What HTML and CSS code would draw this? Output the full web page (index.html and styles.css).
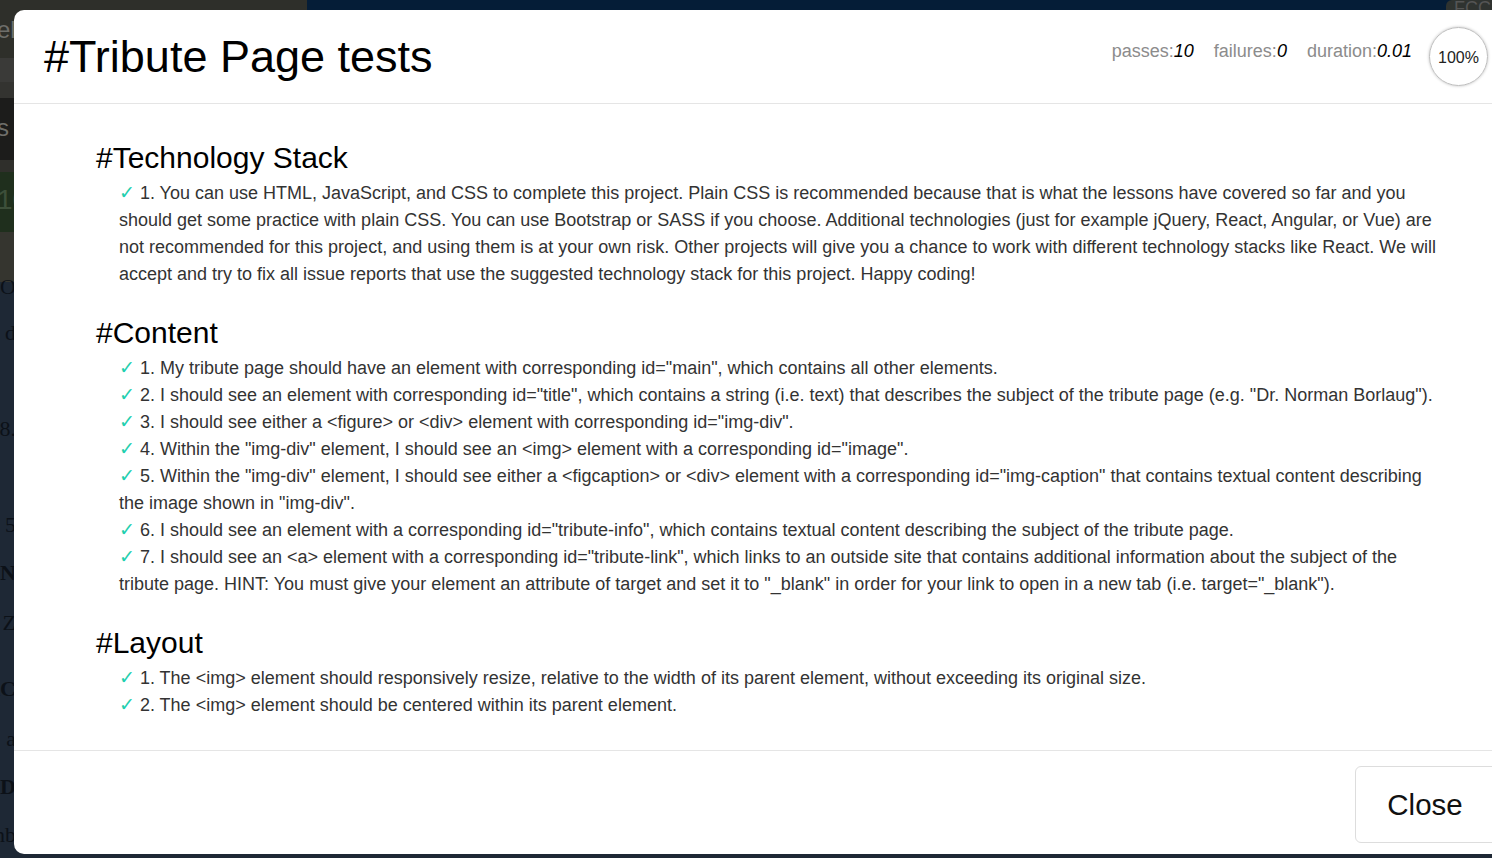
FILE: index.html
```html
<!DOCTYPE html>
<html lang="en">
<head>
<meta charset="utf-8">
<title>Tribute Page tests</title>
<link rel="stylesheet" href="styles.css">
</head>
<body>
<div class="bg">
  <div class="bg-nav">
    <div class="bg-nav-left"><span class="bg-word">el</span></div>
    <div class="bg-nav-right"><span class="fcc-btn">FCC</span></div>
  </div>
  <div class="bg-side">
    <div class="band band-a"></div>
    <div class="band band-b"></div>
    <div class="band band-c"><span class="bg-word">s</span></div>
    <div class="band band-d"></div>
    <div class="band band-e"><span class="bg-word">10</span></div>
    <div class="band band-f"></div>
    <div class="bg-text">
      <p class="t1">O</p>
      <p class="t2">d</p>
      <p class="t3">.8</p>
      <p class="t4">5</p>
      <p class="t5 bold">ON</p>
      <p class="t6">f Z</p>
      <p class="t7 bold">AC</p>
      <p class="t8">a</p>
      <p class="t9 bold">D</p>
      <p class="t10">nb</p>
    </div>
  </div>
  <div class="bg-scroll"><span class="bg-thumb"></span></div>
</div>

<div class="modal">
  <header class="modal-header">
    <h1 class="modal-title">#Tribute Page tests</h1>
    <div class="stats">
      <span class="stat">passes:<em>10</em></span>
      <span class="stat">failures:<em>0</em></span>
      <span class="stat">duration:<em>0.01</em></span>
      <span class="progress">100%</span>
    </div>
  </header>
  <main class="modal-body">
    <section class="suite">
      <h2 class="suite-title">#Technology Stack</h2>
      <ul class="tests">
        <li><span class="check">✓</span> 1. You can use HTML, JavaScript, and CSS to complete this project. Plain CSS is recommended because that is what the lessons have covered so far and you should get some practice with plain CSS. You can use Bootstrap or SASS if you choose. Additional technologies (just for example jQuery, React, Angular, or Vue) are not recommended for this project, and using them is at your own risk. Other projects will give you a chance to work with different technology stacks like React. We will accept and try to fix all issue reports that use the suggested technology stack for this project. Happy coding!</li>
      </ul>
    </section>
    <section class="suite">
      <h2 class="suite-title">#Content</h2>
      <ul class="tests">
        <li><span class="check">✓</span> 1. My tribute page should have an element with corresponding id="main", which contains all other elements.</li>
        <li><span class="check">✓</span> 2. I should see an element with corresponding id="title", which contains a string (i.e. text) that describes the subject of the tribute page (e.g. "Dr. Norman Borlaug").</li>
        <li><span class="check">✓</span> 3. I should see either a &lt;figure&gt; or &lt;div&gt; element with corresponding id="img-div".</li>
        <li><span class="check">✓</span> 4. Within the "img-div" element, I should see an &lt;img&gt; element with a corresponding id="image".</li>
        <li><span class="check">✓</span> 5. Within the "img-div" element, I should see either a &lt;figcaption&gt; or &lt;div&gt; element with a corresponding id="img-caption" that contains textual content describing the image shown in "img-div".</li>
        <li><span class="check">✓</span> 6. I should see an element with a corresponding id="tribute-info", which contains textual content describing the subject of the tribute page.</li>
        <li><span class="check">✓</span> 7. I should see an &lt;a&gt; element with a corresponding id="tribute-link", which links to an outside site that contains additional information about the subject of the tribute page. HINT: You must give your element an attribute of target and set it to "_blank" in order for your link to open in a new tab (i.e. target="_blank").</li>
      </ul>
    </section>
    <section class="suite">
      <h2 class="suite-title">#Layout</h2>
      <ul class="tests">
        <li><span class="check">✓</span> 1. The &lt;img&gt; element should responsively resize, relative to the width of its parent element, without exceeding its original size.</li>
        <li><span class="check">✓</span> 2. The &lt;img&gt; element should be centered within its parent element.</li>
      </ul>
    </section>
  </main>
  <footer class="modal-footer">
    <button class="close-btn" type="button">Close</button>
  </footer>
</div>
</body>
</html>
```

FILE: styles.css
```css
* { box-sizing: border-box; }

html, body {
  margin: 0;
  padding: 0;
}

body {
  width: 1492px;
  height: 858px;
  overflow: hidden;
  position: relative;
  font-family: "Liberation Sans", Arial, sans-serif;
  background: #1e2835;
}

/* ---------- dimmed background page ---------- */
.bg {
  height: 858px;
  display: flex;
  flex-direction: column;
}

.bg-nav {
  height: 58px;
  display: flex;
  flex: none;
}

.bg-nav-left {
  width: 307px;
  background: #2e2f2a;
  padding: 16px 0 0 0;
}

.bg-nav-right {
  flex: 1;
  background: #051d37;
  display: flex;
  justify-content: flex-end;
  align-items: flex-start;
}

.fcc-btn {
  width: 46px;
  height: 40px;
  background: #2f3330;
  color: #555;
  font-size: 18px;
  line-height: 16px;
  padding-left: 8px;
  border-radius: 6px 0 0 6px;
}

.bg-word {
  color: #6e6e6a;
  font-size: 24px;
  line-height: 28px;
  margin-left: -3px;
}

.bg-side {
  width: 307px;
  flex: 1;
  display: flex;
  flex-direction: column;
}

.band { flex: none; }
.band-a { height: 24px; background: #3a3a38; }
.band-b { height: 16px; background: #333330; }
.band-c { height: 62px; background: #1c1c1b; padding-top: 16px; }
.band-d { height: 12px; background: #2f2f2b; }
.band-e { height: 60px; background: #1f2f1d; padding-top: 14px; }
.band-e .bg-word { color: #3d4f3a; font-size: 28px; }
.band-f { height: 50px; background: #35352f; }

.bg-text {
  flex: 1;
  background: #1e2835;
  font-family: "Liberation Serif", "Times New Roman", serif;
  color: #0c1118;
  font-size: 22px;
  width: 16px;
  text-align: right;
}

.bg-text p { margin: 0; line-height: 26px; height: 48px; white-space: nowrap; direction: rtl; }
.bg-text .t1 { height: 46px; margin-top: -8px; }
.bg-text .t2 { height: 96px; }
.bg-text .t3 { height: 96px; }
.bg-text .t4 { height: 48px; }
.bg-text .t5 { height: 50px; }
.bg-text .t6 { height: 66px; }
.bg-text .t7 { height: 50px; }
.bg-text .t8 { height: 48px; }
.bg-text .t9 { height: 48px; }
.bg-text .bold { font-weight: bold; }

.bg-scroll {
  height: 4px;
  flex: none;
  background: #1a1a1a;
  padding-left: 230px;
}

.bg-thumb {
  display: block;
  width: 87px;
  height: 4px;
  background: #4a4a4a;
}

/* ---------- modal ---------- */
.modal {
  position: absolute;
  top: 10px;
  left: 14px;
  width: 1504px;
  height: 844px;
  background: #fff;
  border-radius: 10px;
  display: flex;
  flex-direction: column;
  color: #000;
}

.modal-header {
  height: 94px;
  flex: none;
  border-bottom: 1px solid #e5e5e5;
  padding: 0 30px;
  display: flex;
  align-items: center;
  justify-content: space-between;
}

.modal-title {
  margin: 0;
  font-size: 45px;
  font-weight: normal;
  line-height: 1;
  color: #000;
}

.stats {
  display: flex;
  align-items: center;
  gap: 20px;
}

.stat {
  color: #8c8c8c;
  font-size: 18px;
  margin-top: -10px;
}

.stat em {
  color: #000;
  font-style: italic;
}

.progress {
  width: 59px;
  height: 59px;
  border-radius: 50%;
  border: 1px solid #bdbdbd;
  box-shadow: 0 0 3px rgba(0,0,0,0.25);
  display: flex;
  align-items: center;
  justify-content: center;
  font-size: 16px;
  color: #222;
  margin-left: -3px;
  margin-top: 0;
  padding-top: 2px;
}

.modal-body {
  flex: 1;
  padding: 37px 82px 0 82px;
}

.suite { margin-bottom: 28px; }

.suite-title {
  margin: 0 0 6px 0;
  font-size: 30px;
  font-weight: normal;
  line-height: 33px;
  color: #000;
}

.tests {
  list-style: none;
  margin: 0;
  padding: 0 0 0 23px;
}

.tests li {
  font-size: 18px;
  line-height: 27px;
  color: #333;
}

.check {
  color: #1fcfae;
  font-family: "DejaVu Sans", sans-serif;
  font-size: 19px;
  line-height: 1;
}

.modal-footer {
  flex: none;
  height: 104px;
  border-top: 1px solid #e5e5e5;
  padding: 15px 15px 0 15px;
  display: flex;
  justify-content: flex-end;
  align-items: flex-start;
}

.close-btn {
  width: 148px;
  height: 77px;
  background: #fff;
  border: 1px solid #ddd;
  border-radius: 6px;
  font-family: "Liberation Sans", Arial, sans-serif;
  font-size: 29.5px;
  color: #111;
  padding: 0 8px 0 0;
}
```
